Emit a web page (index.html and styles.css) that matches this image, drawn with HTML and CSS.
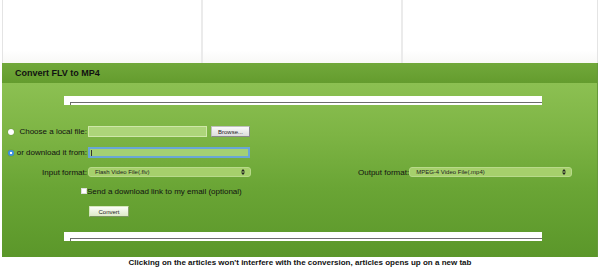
FILE: index.html
```html
<!DOCTYPE html>
<html>
<head>
<meta charset="utf-8">
<link rel="stylesheet" href="styles.css">
</head>
<body>
<div class="top">
  <div class="col"></div>
  <div class="col"></div>
  <div class="col"></div>
</div>
<div class="panel">
  <div class="panel-head">Convert FLV to MP4</div>
  <div class="panel-body">
    <div class="frame"><div class="frame-inner"></div></div>
    <div class="form">
      <div class="row row1">
        <div class="lbl"><span class="radio"></span><span>Choose a local file:</span></div>
        <div class="field short"></div>
        <div class="btn browse">Browse...</div>
      </div>
      <div class="row row2">
        <div class="lbl"><span class="radio on"></span><span>or download it from:</span></div>
        <div class="field long focus"><span class="caret"></span></div>
      </div>
      <div class="row row3">
        <div class="lbl end"><span>Input format:</span></div>
        <div class="select"><span>Flash Video File(.flv)</span><svg width="4" height="6" viewBox="0 0 4 6"><path d="M0 2.5 L2 0 L4 2.5 Z M0 3.5 L2 6 L4 3.5 Z" fill="#222"/></svg></div>
        <div class="out-label">Output format:</div>
        <div class="select"><span>MPEG-4 Video File(.mp4)</span><svg width="4" height="6" viewBox="0 0 4 6"><path d="M0 2.5 L2 0 L4 2.5 Z M0 3.5 L2 6 L4 3.5 Z" fill="#222"/></svg></div>
      </div>
      <div class="row row4">
        <span class="check"></span><span>Send a download link to my email (optional)</span>
      </div>
      <div class="row row5">
        <div class="btn convert">Convert</div>
      </div>
    </div>
    <div class="frame bottom"><div class="frame-inner"></div></div>
  </div>
</div>
<p class="caption">Clicking on the articles won't interfere with the conversion, articles opens up on a new tab</p>
</body>
</html>
```
FILE: styles.css
```css
* { box-sizing: border-box; }
body {
  margin: 0;
  background: #fff;
  font-family: "Liberation Sans", Arial, sans-serif;
  font-size: 8px;
  color: #111;
}
.top {
  height: 63px;
  margin: 0 2px;
  display: grid;
  grid-template-columns: 198px 200px 198px;
  border-left: 1px solid #e4e4e4;
  border-right: 1px solid #e4e4e4;
  background: linear-gradient(#fff 80%, #f8f8f6);
}
.col + .col { border-left: 2px solid #ebebeb; }
.panel {
  margin: 0 2px;
  height: 194px;
  display: flex;
  flex-direction: column;
  border-right: 1px solid #66993a;
}
.panel-head {
  height: 20px;
  background: linear-gradient(#71a83a, #649c2e);
  font-size: 9px;
  font-weight: bold;
  color: #111;
  padding-left: 13px;
  display: flex;
  align-items: center;
}
.panel-body {
  flex: 1;
  background: linear-gradient(#8cc052 0%, #7db444 30%, #6aa535 60%, #5b972a 100%);
  padding-top: 13px;
}
.frame {
  margin-left: 62px;
  width: 478px;
  height: 9px;
  background: #fff;
  overflow: hidden;
  padding: 6px 0 0 6px;
}
.frame-inner {
  height: 6px;
  border-top: 1px solid #6d6d6d;
  border-left: 1px solid #6d6d6d;
}
.frame.bottom { margin-top: 15px; }
.form {
  margin-top: 21px;
  padding-left: 6px;
}
.row {
  display: flex;
  align-items: center;
}
.row1 { height: 11px; }
.row2 { height: 11px; margin-top: 10px; }
.row3 { height: 10px; margin-top: 9px; }
.row4 { height: 10px; margin-top: 9px; }
.row5 { height: 11px; margin-top: 10px; }
.lbl {
  width: 79px;
  margin-right: 1px;
  display: flex;
  justify-content: space-between;
  align-items: center;
  white-space: nowrap;
}
.lbl.end { justify-content: flex-end; }
.radio {
  width: 6px;
  height: 6px;
  border-radius: 50%;
  background: #fff;
  box-shadow: 0 0 1px rgba(0,0,0,0.4);
}
.radio.on {
  background: radial-gradient(circle, #fff 0 1.2px, #3b8fe0 1.6px);
}
.field {
  height: 11px;
  background: #add57a;
  border: 1px solid #cfe7a9;
}
.field.short { width: 119px; }
.field.long { width: 162px; }
.field.focus {
  border: 2px solid #69a6d6;
  background: #a4d073;
  display: flex;
  align-items: center;
  padding-left: 1px;
}
.caret {
  width: 1px;
  height: 6px;
  background: #333;
}
.btn {
  height: 11px;
  display: flex;
  align-items: center;
  justify-content: center;
  font-size: 6px;
  color: #222;
  border: 1px solid #a0a0a0;
  border-radius: 1px;
}
.browse {
  width: 39px;
  margin-left: 4px;
  background: linear-gradient(#fafafa, #dcdcdc);
  border-color: #c0c0c0 #8a8a8a #8a8a8a #c0c0c0;
}
.convert {
  width: 40px;
  margin-left: 81px;
  background: linear-gradient(#fbfdf7, #dde9c8);
  border-color: #d5e6bd #8aa06a #7a9560 #d5e6bd;
}
.select {
  width: 163px;
  height: 10px;
  border-radius: 3px;
  background: #a6d06c;
  border: 1px solid #b8da8a;
  display: flex;
  align-items: center;
  justify-content: space-between;
  padding: 0 5px 0 6px;
  font-size: 6px;
  color: #222;
}
.out-label {
  margin-left: 107px;
  white-space: nowrap;
}
.row4 { padding-left: 73px; }
.check {
  width: 6px;
  height: 6px;
  background: #fff;
  border: 1px solid #ddd;
}
.caption {
  margin: 0;
  padding-top: 1px;
  text-align: center;
  font-weight: bold;
  font-size: 8px;
  line-height: 10px;
  color: #111;
}
```
